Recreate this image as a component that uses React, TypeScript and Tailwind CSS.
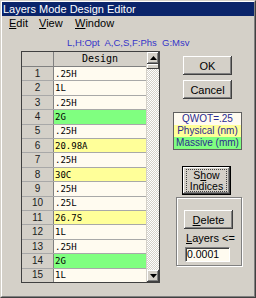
import React from "react";

type Kind = "w" | "y" | "g";
const rows: [string, Kind][] = [
  [".25H", "w"],
  ["1L", "w"],
  [".25H", "w"],
  ["2G", "g"],
  [".25H", "w"],
  ["20.98A", "y"],
  [".25H", "w"],
  ["30C", "y"],
  [".25H", "w"],
  [".25L", "w"],
  ["26.7S", "y"],
  ["1L", "w"],
  [".25H", "w"],
  ["2G", "g"],
  ["1L", "w"],
];

const bgFor: Record<Kind, string> = {
  w: "bg-[#fffbf0]",
  y: "bg-[#ffff99]",
  g: "bg-[#80ff80]",
};

function Btn({ children, className = "" }: { children: React.ReactNode; className?: string }) {
  return (
    <div
      className={`flex items-center justify-center bg-[#d4d0c8] text-[11px] leading-[12px] text-black shadow-[inset_-1px_-1px_0_#404040,inset_1px_1px_0_#ffffff,inset_-2px_-2px_0_#808080] ${className}`}
    >
      {children}
    </div>
  );
}

function ScrollBtn({ up }: { up: boolean }) {
  return (
    <div className="h-[12px] w-full flex items-center justify-center bg-[#d4d0c8] shadow-[inset_-1px_-1px_0_#404040,inset_1px_1px_0_#ffffff,inset_-2px_-2px_0_#808080]">
      <svg width="7" height="4" viewBox="0 0 7 4">
        {up ? <polygon points="3.5,0 7,4 0,4" fill="#000" /> : <polygon points="0,0 7,0 3.5,4" fill="#000" />}
      </svg>
    </div>
  );
}

export default function App() {
  return (
    <div className="w-[256px] h-[298px] bg-[#d4d0c8] border border-t-[#d4d0c8] border-l-[#d4d0c8] border-r-[#404040] border-b-[#404040] font-['Liberation_Sans',sans-serif] leading-[12px] overflow-hidden">
      <div className="w-full h-full border border-t-white border-l-white border-r-[#808080] border-b-[#808080] flex flex-col">
        {/* Title bar */}
        <div className="h-[14px] bg-[#0a246a] text-white text-[11px] leading-[14px] pl-[1px] whitespace-nowrap">
          Layers Mode Design Editor
        </div>
        {/* Menu bar */}
        <div className="h-[15px] flex items-center text-[11px] leading-[13px] text-black pl-[7px]">
          <span className="w-[30px]"><span className="underline">E</span>dit</span>
          <span className="w-[36px]"><span className="underline">V</span>iew</span>
          <span><span className="underline">W</span>indow</span>
        </div>
        {/* Hint */}
        <div className="h-[20px] pt-[6px] pl-[65px] text-[9.5px] leading-[11px] text-[#3535c8] whitespace-nowrap">
          L,H:Opt&nbsp; A,C,S,F:Phs&nbsp; G:Msv
        </div>
        {/* Body */}
        <div className="flex">
          {/* Grid */}
          <div className="ml-[19px] w-[139px] h-[232px] border border-[#404040] flex">
            <div className="w-[124px] flex flex-col">
              <div className="h-[15px] flex border-b border-[#808080] bg-[#d4d0c8]">
                <div className="w-[32px] border-r border-[#808080]" />
                <div className="flex-1 text-center text-[10px] leading-[14px] font-['DejaVu_Sans_Mono',monospace] text-black">
                  Design
                </div>
              </div>
              {rows.map(([v, k], i) => (
                <div
                  key={i}
                  className={`flex-1 min-h-0 flex leading-[10px] ${i < rows.length - 1 ? "border-b border-[#a8a8a8]" : ""}`}
                >
                  <div className="w-[32px] border-r border-[#808080] bg-[#d4d0c8] flex items-center justify-center text-[10px] text-[#202020]">
                    {i + 1}
                  </div>
                  <div
                    className={`flex-1 ${bgFor[k]} flex items-center pl-[1px] text-[9px] font-['DejaVu_Sans_Mono',monospace] text-black`}
                  >
                    {v}
                  </div>
                </div>
              ))}
            </div>
            {/* Scrollbar */}
            <div className="w-[13px] flex flex-col border-l border-[#d4d0c8] bg-[repeating-conic-gradient(#ffffff_0_25%,#d4d0c8_0_50%)] bg-[length:2px_2px]">
              <ScrollBtn up />
              <div className="h-[5px] w-full bg-[#d4d0c8] shadow-[inset_-1px_-1px_0_#404040,inset_1px_1px_0_#ffffff]" />
              <div className="flex-1" />
              <ScrollBtn up={false} />
            </div>
          </div>
          {/* Right column */}
          <div className="flex flex-col">
            <Btn className="mt-[5px] ml-[23px] w-[49px] h-[19px]">OK</Btn>
            <Btn className="mt-[5px] ml-[23px] w-[49px] h-[19px]">Cancel</Btn>
            <div className="mt-[13px] ml-[13px] w-[69px] border border-[#606060] flex flex-col text-[10px] leading-[12px] text-[#2a2a90] text-center whitespace-nowrap">
              <div className="h-[12px] bg-[#fffbf0]">QWOT=.25</div>
              <div className="h-[12px] bg-[#ffff99]">Physical (nm)</div>
              <div className="h-[12px] bg-[#80ff80]">Massive (mm)</div>
            </div>
            <div className="mt-[16px] ml-[22px] w-[49px] h-[29px] border border-black">
              <Btn className="w-full h-full">
                <div className="w-[41px] h-[23px] border border-dotted border-[#404040] flex flex-col items-center justify-center text-[10.5px] leading-[11px]">
                  <span>S<span className="underline">h</span>ow</span>
                  <span>Indices</span>
                </div>
              </Btn>
            </div>
            <div className="mt-[2px] ml-[16px] w-[66px] h-[69px] border border-[#808080] shadow-[inset_1px_1px_0_#ffffff,1px_1px_0_#ffffff] flex flex-col">
              <Btn className="mt-[12px] ml-[7px] w-[49px] h-[19px]">
                <span><span className="underline">D</span>elete</span>
              </Btn>
              <div className="mt-[3px] ml-[9px] text-[11px] leading-[12px] text-black whitespace-nowrap">
                <span className="underline">L</span>ayers &lt;=
              </div>
              <div className="mt-[3px] ml-[8px] w-[45px] h-[15px] bg-[#fffbf0] border border-t-[#808080] border-l-[#808080] border-r-white border-b-white shadow-[inset_1px_1px_0_#404040] text-[10.5px] leading-[13px] pl-[1px] text-black">
                0.0001
              </div>
            </div>
          </div>
        </div>
      </div>
    </div>
  );
}
